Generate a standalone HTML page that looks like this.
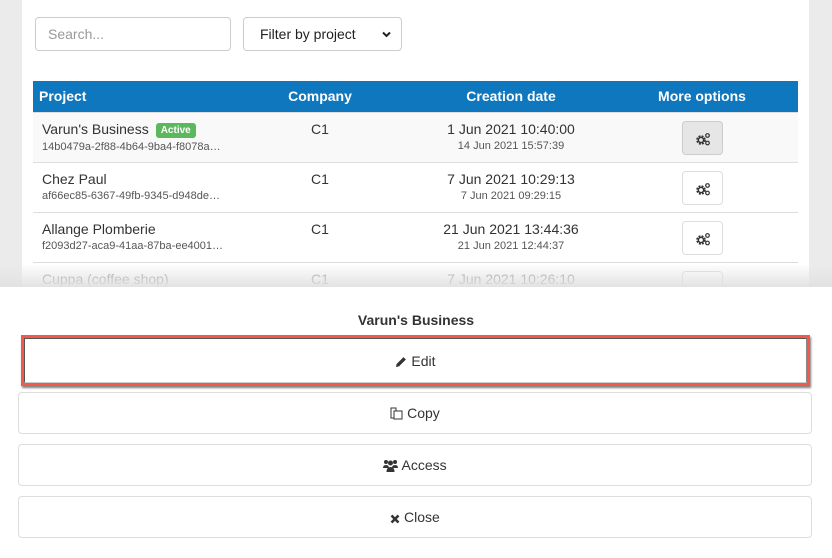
<!DOCTYPE html>
<html><head><style>
*{box-sizing:border-box;margin:0;padding:0}
body{width:832px;height:558px;overflow:hidden;background:#ebebeb;font-family:"Liberation Sans",Arial,sans-serif;color:#333;position:relative}
.panel{position:absolute;left:22px;top:0;width:787px;height:300px;background:#fff}
.inp{position:absolute;top:17px;height:34px;border:1px solid #ccc;border-radius:4px;font-size:14px;line-height:32px;padding-left:12px;background:#fff}
table{position:absolute;left:33px;top:81px;width:765px;border-collapse:collapse;font-size:14px;table-layout:fixed}
th{background:#0f77bd;color:#fff;height:31px;font-weight:bold;text-align:center}
th.l{text-align:left;padding-left:6px}
td{height:50px;border-top:1px solid #ddd;vertical-align:top;padding-top:8px;text-align:center}
td.l{text-align:left;padding-left:9px}
.sub{font-size:11px;color:#555;margin-top:3px}
.badge{display:inline-block;background:#5cb85c;color:#fff;font-size:10px;font-weight:bold;padding:2px 5px;border-radius:3px;margin-left:7px;vertical-align:1px}
.gb{display:inline-block;width:41px;height:34px;border:1px solid #ddd;border-radius:4px;background:#fff;margin-top:0px;padding-top:9px}
.fade{position:absolute;left:0;top:265px;width:832px;height:22px;background:linear-gradient(rgba(235,235,235,0.1),rgba(225,225,225,0.95))}
.sheet{position:absolute;left:0;top:287px;width:832px;height:271px;background:#fff}
.title{position:absolute;top:25px;width:100%;text-align:center;font-weight:bold;font-size:14px}
.btn{position:absolute;left:18px;width:794px;height:42px;border:1px solid #ddd;border-radius:4px;text-align:center;line-height:40px;font-size:14px;background:#fff}
.edit{position:absolute;left:21px;top:48px;width:789px;height:51px;border:3px solid #f2594b;box-shadow:1px 2px 2px rgba(0,0,0,.5);text-align:center;line-height:46px;font-size:14px}
.edit::before{content:"";position:absolute;inset:0;border:1px solid #555;border-bottom-color:#ccc;border-right-color:#888}
svg{vertical-align:-2px}
</style></head><body>
<div class="panel"></div>
<div class="inp" style="left:35px;width:196px;color:#999">Search...</div>
<div class="inp" style="left:243px;width:159px;color:#222;padding-left:16px">Filter by project <svg style="position:absolute;right:10px;top:13px" width="9" height="7" viewBox="0 0 9 7"><path d="M1 1.5L4.5 5 8 1.5" stroke="#222" stroke-width="2" fill="none"/></svg></div>
<svg width="0" height="0" style="position:absolute"><defs><g id="g"><circle cx="6" cy="8" r="3.6" fill="none" stroke="#333" stroke-width="2.4" stroke-dasharray="1.8 1.1"/><circle cx="6" cy="8" r="2.6" fill="none" stroke="#333" stroke-width="1.4"/><circle cx="12.5" cy="3.5" r="1.8" fill="none" stroke="#333" stroke-width="1.2"/><circle cx="12.5" cy="11" r="1.8" fill="none" stroke="#333" stroke-width="1.2"/></g></defs></svg>
<table>
<colgroup><col style="width:191px"><col style="width:192px"><col style="width:190px"><col style="width:192px"></colgroup>
<tr><th class="l">Project</th><th>Company</th><th>Creation date</th><th>More options</th></tr>
<tr style="background:#f9f9f9"><td class="l">Varun's Business<span class="badge">Active</span><div class="sub">14b0479a-2f88-4b64-9ba4-f8078a…</div></td><td>C1</td><td>1 Jun 2021 10:40:00<div class="sub">14 Jun 2021 15:57:39</div></td><td><span class="gb" style="background:#e6e6e6;border-color:#ccc"><svg width="15" height="14"><use href="#g"/></svg></span></td></tr>
<tr><td class="l">Chez Paul<div class="sub">af66ec85-6367-49fb-9345-d948de…</div></td><td>C1</td><td>7 Jun 2021 10:29:13<div class="sub">7 Jun 2021 09:29:15</div></td><td><span class="gb"><svg width="15" height="14"><use href="#g"/></svg></span></td></tr>
<tr><td class="l">Allange Plomberie<div class="sub">f2093d27-aca9-41aa-87ba-ee4001…</div></td><td>C1</td><td>21 Jun 2021 13:44:36<div class="sub">21 Jun 2021 12:44:37</div></td><td><span class="gb"><svg width="15" height="14"><use href="#g"/></svg></span></td></tr>
<tr><td class="l" style="color:#999">Cuppa (coffee shop)</td><td style="color:#999">C1</td><td style="color:#999">7 Jun 2021 10:26:10</td><td><span class="gb"></span></td></tr>
</table>
<div class="fade"></div>
<div class="sheet">
<div class="title">Varun's Business</div>
<div class="edit"><svg width="12" height="12" viewBox="0 0 12 12"><path d="M1 11l.6-3L8.5 1.1l2.4 2.4L4 10.4z" fill="#333"/></svg> Edit</div>
<div class="btn" style="top:105px"><svg width="13" height="13" viewBox="0 0 13 13"><path d="M1 1h5v3H4v7H1zM4 4h8v8H4z" fill="none" stroke="#333" stroke-width="1"/></svg> Copy</div>
<div class="btn" style="top:157px"><svg width="15" height="13" viewBox="0 0 15 13"><circle cx="3" cy="3" r="2" fill="#333"/><circle cx="12" cy="3" r="2" fill="#333"/><circle cx="7.5" cy="4" r="2.5" fill="#333"/><path d="M0 9q0-3 3-3t3 3zM9 9q0-3 3-3t3 3zM3.5 13q0-5 4-5t4 5z" fill="#333"/></svg> Access</div>
<div class="btn" style="top:209px"><svg width="10" height="10" viewBox="0 0 10 10"><path d="M1.5 1.5l7 7M8.5 1.5l-7 7" stroke="#333" stroke-width="2.6"/></svg> Close</div>
</div>
</body></html>
